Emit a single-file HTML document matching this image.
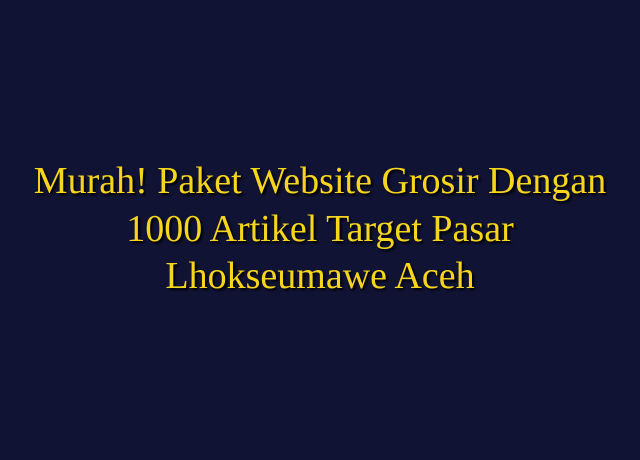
<!DOCTYPE html>
<html><head><style>
html,body{margin:0;padding:0;width:640px;height:460px;background:#111334;overflow:hidden}
.t{position:absolute;left:0;top:158px;width:640px;text-align:center;font-family:"Liberation Serif",serif;font-size:38px;line-height:47.5px;color:#f7d51c;text-shadow:2px 2px 2px #000;white-space:nowrap}
</style></head><body>
<div class="t">Murah! Paket Website Grosir Dengan<br>1000 Artikel Target Pasar<br>Lhokseumawe Aceh</div>
</body></html>
